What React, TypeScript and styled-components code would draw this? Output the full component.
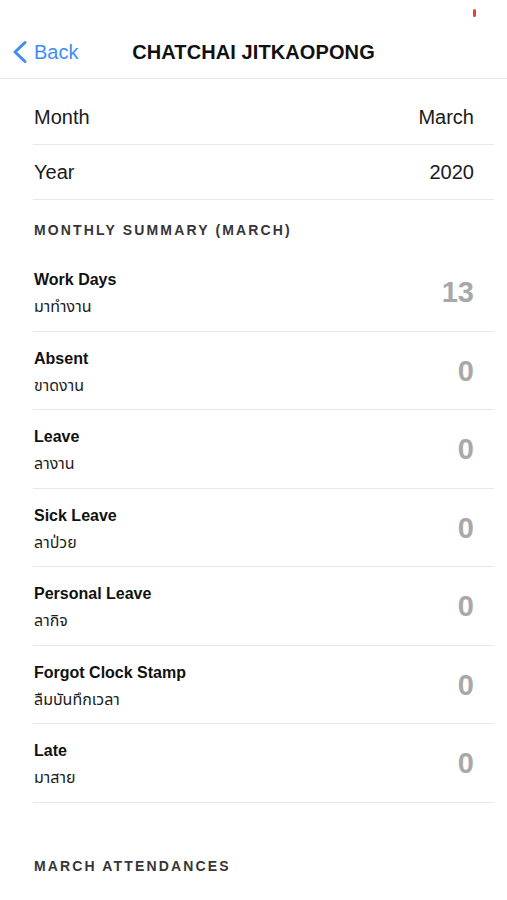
import React from 'react'
import styled, { createGlobalStyle } from 'styled-components'

const GlobalStyle = createGlobalStyle`
    html, body {
        margin: 0;
        padding: 0;
        background: #fff;
    }
    body {
        font-family: "Liberation Sans", "Noto Sans Thai", "Noto Sans", sans-serif;
        color: #111;
    }
`

const Screen = styled.div`
    width: 507px;
    min-height: 900px;
    background: #fff;
    overflow: hidden;
`

const StatusBar = styled.div`
    height: 26px;
    display: flex;
    justify-content: flex-end;
    align-items: flex-start;
    padding: 9px 31px 0 0;
    box-sizing: border-box;
`

const RecIndicator = styled.div`
    width: 3px;
    height: 8px;
    border-radius: 2px;
    background: #e8433b;
`

const NavBar = styled.div`
    height: 53px;
    display: grid;
    grid-template-columns: 1fr auto 1fr;
    align-items: center;
    border-bottom: 1px solid #e6e6e6;
    box-sizing: border-box;
`

const BackButton = styled.div`
    display: flex;
    align-items: center;
    gap: 6px;
    padding-left: 12px;
    color: #3d8ef2;
    font-size: 20px;
`

const NavTitle = styled.div`
    font-size: 20px;
    font-weight: 700;
    color: #111;
    letter-spacing: 0.1px;
`

const List = styled.div`
    padding-top: 12px;
`

const Row = styled.div<{ $height: number }>`
    height: ${p => p.$height}px;
    margin: 0 13px 0 33px;
    padding: 0 20px 0 1px;
    display: flex;
    align-items: center;
    justify-content: space-between;
    border-bottom: 1px solid #e8e8e8;
    box-sizing: border-box;
`

const RowLabel = styled.div`
    font-size: 20px;
    color: #1a1a1a;
`

const RowValue = styled.div`
    font-size: 20px;
    color: #1a1a1a;
`

const SectionHeader = styled.div<{ $top: number; $bottom: number }>`
    padding: ${p => p.$top}px 0 ${p => p.$bottom}px 34px;
    font-size: 14px;
    line-height: 16px;
    font-weight: 700;
    letter-spacing: 2.15px;
    color: #363636;
`

const StatText = styled.div`
    display: flex;
    flex-direction: column;
    gap: 7px;
    padding-top: 4px;
`

const StatTitle = styled.div`
    font-size: 16px;
    line-height: 19px;
    font-weight: 700;
    color: #111;
`

const StatSub = styled.div`
    font-size: 16px;
    line-height: 21px;
    color: #1c1c1c;
`

const StatValue = styled.div`
    font-size: 29px;
    font-weight: 700;
    color: #a8a8a8;
    padding-top: 2px;
`

const ChevronLeft = () => (
    <svg width="16" height="24" viewBox="0 0 16 24">
        <polyline points="13,2.5 3,12 13,21.5" fill="none" stroke="#3d8ef2"
            strokeWidth="3" strokeLinecap="round" strokeLinejoin="round" />
    </svg>
)

const stats = [
    { title: 'Work Days', sub: 'มาทำงาน', value: 13 },
    { title: 'Absent', sub: 'ขาดงาน', value: 0 },
    { title: 'Leave', sub: 'ลางาน', value: 0 },
    { title: 'Sick Leave', sub: 'ลาป่วย', value: 0 },
    { title: 'Personal Leave', sub: 'ลากิจ', value: 0 },
    { title: 'Forgot Clock Stamp', sub: 'ลืมบันทึกเวลา', value: 0 },
    { title: 'Late', sub: 'มาสาย', value: 0 },
]

export default function App() {
    return (
        <Screen>
            <GlobalStyle />
            <StatusBar>
                <RecIndicator />
            </StatusBar>
            <NavBar>
                <BackButton>
                    <ChevronLeft />
                    Back
                </BackButton>
                <NavTitle>CHATCHAI JITKAOPONG</NavTitle>
                <div />
            </NavBar>
            <List>
                <Row $height={54}>
                    <RowLabel>Month</RowLabel>
                    <RowValue>March</RowValue>
                </Row>
                <Row $height={55}>
                    <RowLabel>Year</RowLabel>
                    <RowValue>2020</RowValue>
                </Row>
            </List>
            <SectionHeader $top={22} $bottom={15}>MONTHLY SUMMARY (MARCH)</SectionHeader>
            {stats.map((s, index) => (
                <Row key={index} $height={78.5}>
                    <StatText>
                        <StatTitle>{s.title}</StatTitle>
                        <StatSub>{s.sub}</StatSub>
                    </StatText>
                    <StatValue>{s.value}</StatValue>
                </Row>
            ))}
            <SectionHeader $top={55} $bottom={20}>MARCH ATTENDANCES</SectionHeader>
        </Screen>
    )
}
